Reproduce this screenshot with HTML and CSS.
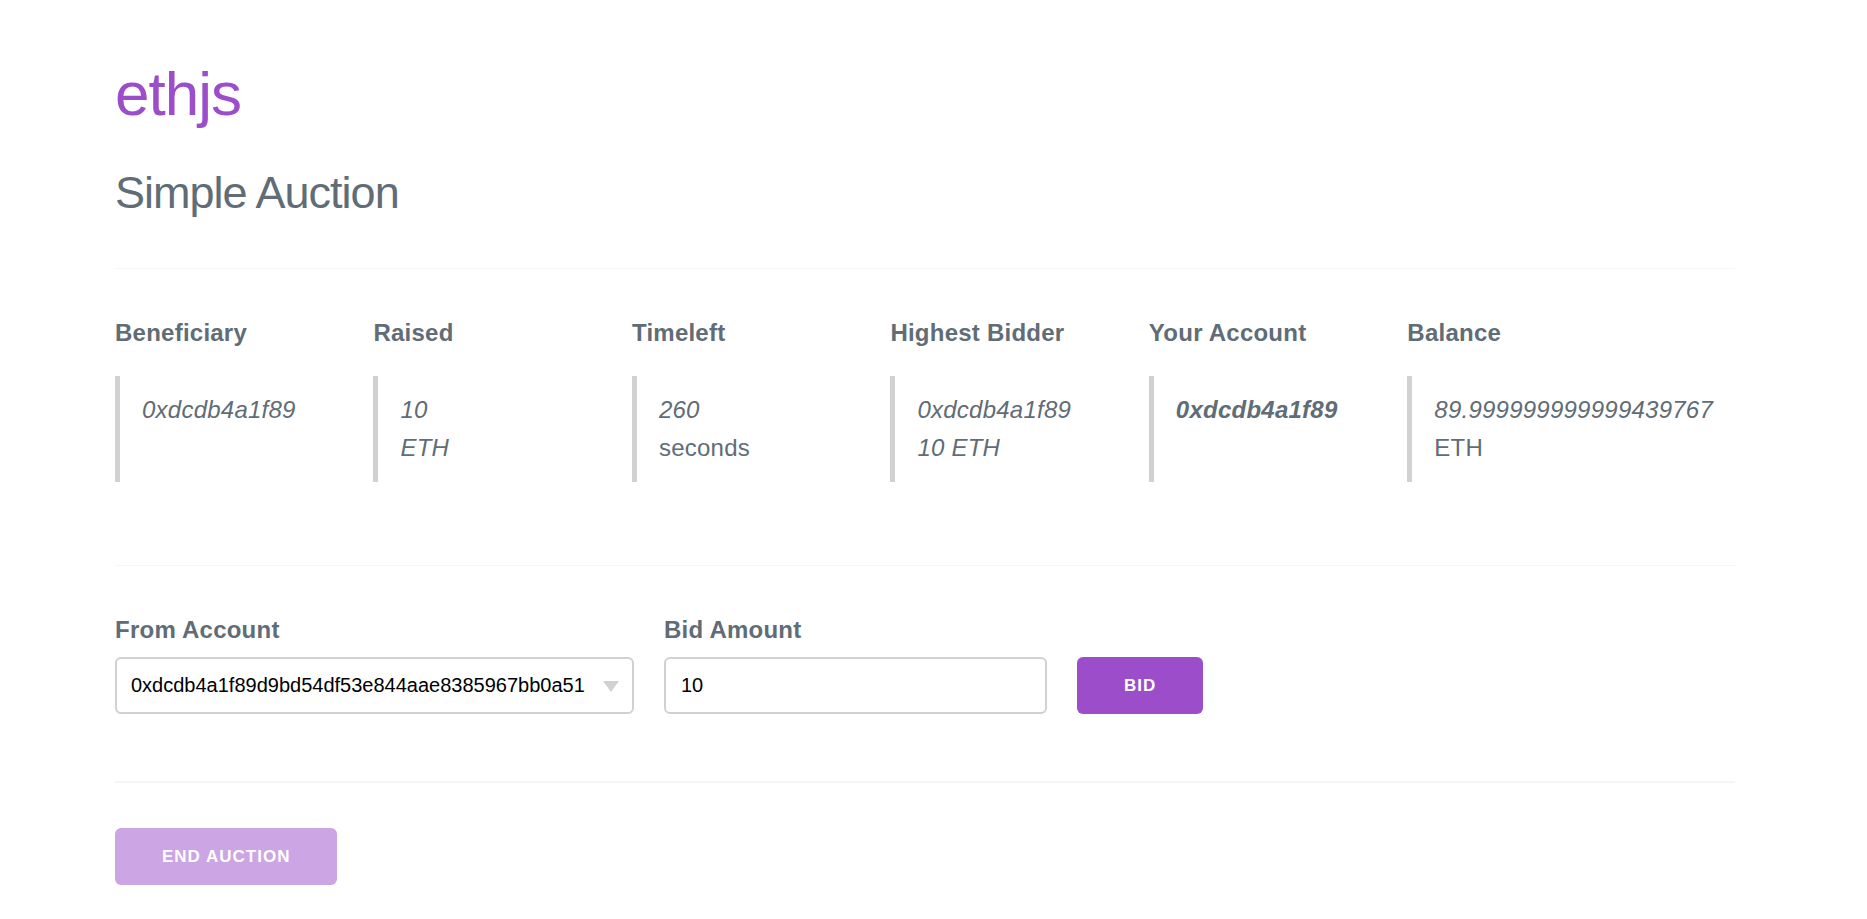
FILE: index.html
```html
<!DOCTYPE html>
<html lang="en">
<head>
<meta charset="utf-8">
<title>ethjs - Simple Auction</title>
<link rel="stylesheet" href="styles.css">
</head>
<body>
<main class="container">
  <header class="header">
    <h1 class="brand">ethjs</h1>
    <h2 class="title">Simple Auction</h2>
  </header>

  <section class="stats">
    <div class="stat">
      <h3 class="label">Beneficiary</h3>
      <blockquote class="quote"><em>0xdcdb4a1f89</em></blockquote>
    </div>
    <div class="stat">
      <h3 class="label">Raised</h3>
      <blockquote class="quote"><em>10<br>ETH</em></blockquote>
    </div>
    <div class="stat">
      <h3 class="label">Timeleft</h3>
      <blockquote class="quote"><em>260</em><br>seconds</blockquote>
    </div>
    <div class="stat">
      <h3 class="label">Highest Bidder</h3>
      <blockquote class="quote"><em>0xdcdb4a1f89<br>10 ETH</em></blockquote>
    </div>
    <div class="stat">
      <h3 class="label">Your Account</h3>
      <blockquote class="quote"><em><strong>0xdcdb4a1f89</strong></em></blockquote>
    </div>
    <div class="stat">
      <h3 class="label">Balance</h3>
      <blockquote class="quote"><em>89.999999999999439767</em><br>ETH</blockquote>
    </div>
  </section>

  <form class="bid-form">
    <div class="field">
      <label class="label" for="account">From Account</label>
      <div class="select-wrap">
        <select class="control select" id="account">
          <option>0xdcdb4a1f89d9bd54df53e844aae8385967bb0a51</option>
        </select>
        <svg class="arrow" viewBox="0 0 16 11" aria-hidden="true"><path d="M0 0h16L8 11z"/></svg>
      </div>
    </div>
    <div class="field">
      <label class="label" for="amount">Bid Amount</label>
      <input class="control input" id="amount" type="text" value="10">
    </div>
    <button class="button" type="button">Bid</button>
  </form>

  <footer class="footer">
    <button class="button" type="button" disabled>End Auction</button>
  </footer>
</main>
</body>
</html>
```

FILE: styles.css
```css
*,
*::before,
*::after {
  box-sizing: border-box;
}

body {
  margin: 0;
  background: #fff;
  color: #606c76;
  font-family: "Liberation Sans", Arial, sans-serif;
  font-size: 24px;
  letter-spacing: 0.01em;
  line-height: 38px;
}

.container {
  padding: 56px 132px 34px 115px;
}

.header {
  display: grid;
  gap: 34px;
  padding-bottom: 48px;
}

.brand,
.title {
  margin: 0;
  font-weight: 400;
  letter-spacing: -1px;
}

.brand {
  color: #9b4dca;
  font-size: 62px;
  line-height: 76px;
}

.title {
  font-size: 45px;
  line-height: 54px;
}

.label {
  margin: 0;
  font-size: 24px;
  font-weight: 700;
}

.stats {
  display: grid;
  grid-template-columns: repeat(5, 1fr) auto;
  padding: 45px 0 83px;
  border-top: 1px solid #f4f5f6;
}

.stat {
  display: flex;
  flex-direction: column;
  gap: 24px;
}

.quote {
  flex: 1;
  margin: 0;
  padding: 15px 22px;
  border-left: 5px solid #d1d1d1;
}

.bid-form {
  display: flex;
  flex-wrap: wrap;
  align-items: flex-end;
  gap: 30px;
  padding: 45px 0 67px;
  border-top: 1px solid #f4f5f6;
}

.field {
  display: flex;
  flex-direction: column;
  gap: 8px;
}

.select-wrap {
  position: relative;
}

.control {
  display: block;
  height: 57px;
  margin: 0;
  border: 2px solid #d1d1d1;
  border-radius: 6px;
  background: transparent;
  color: #000;
  font-family: inherit;
  font-size: 20px;
}

.select {
  padding: 0 47px 1px 14px;
  appearance: none;
}

.arrow {
  position: absolute;
  top: 24px;
  right: 15px;
  width: 16px;
  height: 11px;
  fill: #d1d1d1;
  pointer-events: none;
}

.input {
  width: 383px;
  padding: 0 15px;
}

.button {
  height: 57px;
  padding: 0 47px;
  border: 0;
  border-radius: 6px;
  background: #9b4dca;
  color: #fff;
  font-family: inherit;
  font-size: 17px;
  font-weight: 700;
  letter-spacing: 1px;
  text-transform: uppercase;
}

.button:disabled {
  opacity: 0.5;
}

.footer {
  padding-top: 45px;
  border-top: 2px solid #f4f5f6;
}
```
